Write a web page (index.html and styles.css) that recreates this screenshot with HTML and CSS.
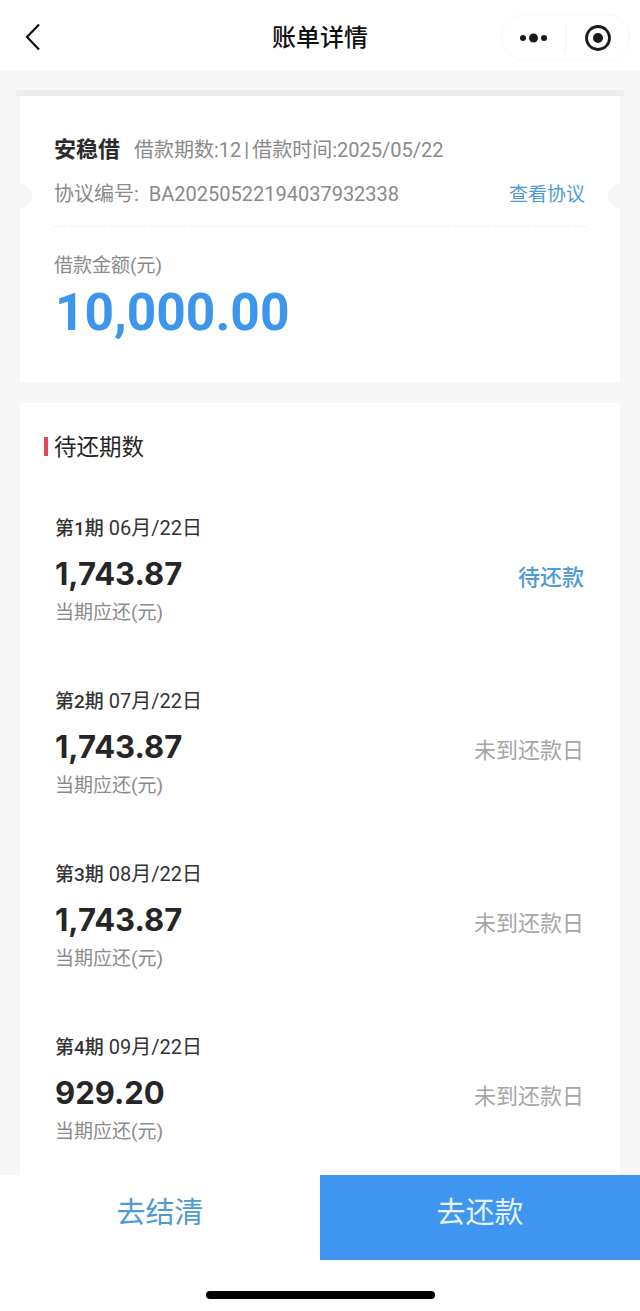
FILE: index.html
```html
<!DOCTYPE html>
<html lang="zh-CN">
<head>
    <meta charset="UTF-8">
    <meta name="viewport" content="width=device-width, initial-scale=1.0">
    <title>账单详情</title>
    <link rel="stylesheet" href="styles.css">
</head>
<body>
    <header class="navbar">
        <svg class="back" width="18" height="28" viewBox="0 0 18 28"><path d="M15 1.5 3 14l12 12.5" fill="none" stroke="#111" stroke-width="2.2"/></svg>
        <h1>账单详情</h1>
        <div class="capsule">
            <svg class="more" width="30" height="12" viewBox="0 0 30 12"><circle cx="4" cy="6" r="3" fill="#1a1a1a"/><circle cx="14.500" cy="6" r="4.500" fill="#1a1a1a"/><circle cx="25" cy="6" r="3" fill="#1a1a1a"/></svg>
            <span class="divider"></span>
            <svg class="target" width="28" height="28" viewBox="0 0 28 28"><circle cx="14" cy="14" r="11.500" fill="none" stroke="#1a1a1a" stroke-width="2.800"/><circle cx="14" cy="14" r="5" fill="#1a1a1a"/></svg>
        </div>
    </header>

    <main class="content">
        <section class="card summary">
            <span class="notch notch-left"></span>
            <span class="notch notch-right"></span>
            <div class="summary-title">
                <strong>安稳借</strong>
                <span>借款期数:12 | 借款时间:2025/05/22</span>
            </div>
            <div class="summary-contract">
                <span>协议编号:&nbsp; BA20250522194037932338</span>
                <a class="link">查看协议</a>
            </div>
            <p class="amount-label">借款金额(元)</p>
            <p class="amount">10,000.00</p>
        </section>

        <section class="card periods">
            <h2>待还期数</h2>
            <div class="period">
                <div>
                    <p class="period-date"><b>第1期</b> 06月/22日</p>
                    <p class="period-money">1,743.87</p>
                    <p class="period-note">当期应还(元)</p>
                </div>
                <span class="status status-due">待还款</span>
            </div>
            <div class="period">
                <div>
                    <p class="period-date"><b>第2期</b> 07月/22日</p>
                    <p class="period-money">1,743.87</p>
                    <p class="period-note">当期应还(元)</p>
                </div>
                <span class="status">未到还款日</span>
            </div>
            <div class="period">
                <div>
                    <p class="period-date"><b>第3期</b> 08月/22日</p>
                    <p class="period-money">1,743.87</p>
                    <p class="period-note">当期应还(元)</p>
                </div>
                <span class="status">未到还款日</span>
            </div>
            <div class="period">
                <div>
                    <p class="period-date"><b>第4期</b> 09月/22日</p>
                    <p class="period-money">929.20</p>
                    <p class="period-note">当期应还(元)</p>
                </div>
                <span class="status">未到还款日</span>
            </div>
        </section>
    </main>

    <footer class="footer">
        <div class="actions">
            <button type="button" class="btn btn-plain">去结清</button>
            <button type="button" class="btn btn-primary">去还款</button>
        </div>
        <div class="home-bar"></div>
    </footer>
</body>
</html>
```

FILE: styles.css
```css
* {
    box-sizing: border-box;
}
html, body {
    margin: 0;
    padding: 0;
}
body {
    font-family: Roboto, "Noto Sans CJK SC", sans-serif;
    background-color: #f7f7f7;
    color: #262626;
    height: 100vh;
    display: flex;
    flex-direction: column;
    overflow: hidden;
}
p, h1, h2 {
    margin: 0;
    font-weight: normal;
}

/* top bar */
.navbar {
    height: 70px;
    flex: none;
    background: #fff;
    display: flex;
    align-items: center;
    justify-content: center;
    position: relative;
}
.navbar h1 {
    font-size: 24px;
    font-weight: 500;
    color: #111;
    margin-top: 1px;
}
.back {
    position: absolute;
    left: 24px;
    top: 23px;
}
.capsule {
    position: absolute;
    left: 501px;
    top: 14px;
    width: 129px;
    height: 47px;
    border: 1px solid #f8f8f8;
    border-radius: 24px;
    display: flex;
    align-items: center;
}
.more {
    margin-left: 17px;
}
.divider {
    width: 1px;
    height: 30px;
    margin-left: 16px;
    background: #f1f1f1;
}
.target {
    margin-left: 18px;
}

.content {
    flex: 1;
    min-height: 0;
    overflow: hidden;
    padding: 20px 20px 0;
}
.card {
    background: #fff;
    position: relative;
}

/* summary */
.summary {
    height: 292px;
    margin-top: 0;
    padding: 37px 38px 0;
    border-top: 6px solid #ececec;
    margin-left: -4px;
    margin-right: -4px;
    background: linear-gradient(to right, #f7f7f7 4px, #fff 4px, #fff 604px, #f7f7f7 604px);
    border-radius: 3px 3px 0 0;
}
.notch {
    position: absolute;
    top: 88px;
    width: 24px;
    height: 24px;
    border-radius: 50%;
    background: #f7f7f7;
}
.notch-left {
    left: -8px;
}
.notch-right {
    right: -8px;
}
.summary-title {
    display: flex;
    align-items: baseline;
    gap: 14px;
    height: 34px;
    font-size: 20px;
    color: #8a8a8a;
    line-height: 34px;
    word-spacing: -2px;
}
.summary-title strong {
    font-size: 22px;
    font-weight: 700;
    color: #2b2b2b;
}
.summary-contract {
    display: flex;
    justify-content: space-between;
    align-items: center;
    margin-top: 8px;
    height: 34px;
    font-size: 20px;
    color: #8a8a8a;
}
.link {
    font-size: 19px;
    color: #4e9ad6;
    margin-right: 1px;
}
.amount-label {
    margin-top: 17px;
    padding-top: 26px;
    border-top: 1px dashed #eeeeee;
    font-size: 19px;
    line-height: 26px;
    color: #8a8a8a;
}
.amount {
    font-family: Roboto, sans-serif;
    font-weight: 700;
    font-size: 51.500px;
    line-height: 60px;
    margin-top: 4px;
    margin-left: 1px;
    color: #3e96ec;
}

/* periods */
.periods {
    margin-top: 21px;
    padding: 28px 36px 0 34px;
    height: 800px;
}
.periods h2 {
    font-size: 22.500px;
    line-height: 32px;
    color: #262626;
    position: relative;
    margin-bottom: 52px;
}
.periods h2::before {
    content: "";
    position: absolute;
    left: -10px;
    top: 6px;
    width: 4px;
    height: 19px;
    background: #e8475a;
}
.period {
    height: 173px;
    display: flex;
    justify-content: space-between;
}
.period-date {
    margin-left: 1px;
    font-size: 20px;
    line-height: 26px;
    color: #333;
}
.period-date b {
    font-size: 19px;
    font-weight: 500;
}
.period-money {
    font-family: Inter, sans-serif;
    font-weight: 700;
    font-size: 31px;
    line-height: 40px;
    margin-top: 12px;
    margin-left: 1px;
    color: #262626;
}
.period-note {
    margin-left: 1px;
    font-size: 19px;
    line-height: 26px;
    margin-top: 6px;
    color: #8a8a8a;
}
.status {
    font-size: 22px;
    line-height: 32px;
    margin-top: 47px;
    color: #a6a6a6;
}
.status-due {
    color: #4e9ad6;
    font-weight: 500;
}

/* bottom buttons */
.footer {
    flex: none;
    background: #fff;
    height: 136px;
}
.actions {
    display: flex;
    height: 85px;
}
.btn {
    flex: 1;
    border: none;
    font-family: inherit;
    font-size: 29px;
    padding: 0 0 15px;
}
.btn-plain {
    background: #fff;
    color: #4e9ad6;
}
.btn-primary {
    background: #3e96f0;
    color: #e8f3ff;
}
.home-bar {
    width: 229px;
    height: 8px;
    border-radius: 4px;
    background: #000;
    margin: 31px auto 0;
}
```
